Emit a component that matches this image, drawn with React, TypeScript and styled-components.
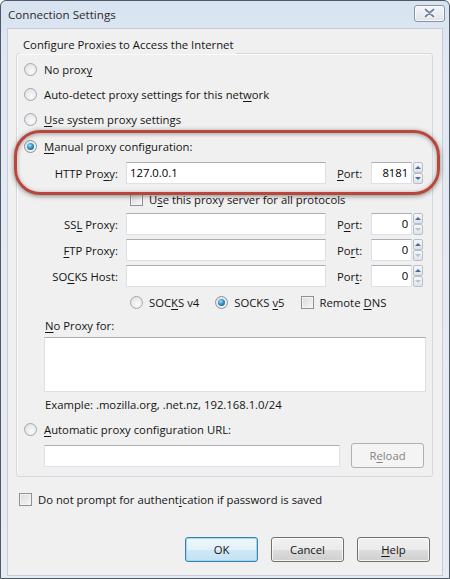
import React from 'react';
import styled, { createGlobalStyle, css } from 'styled-components';

const GlobalStyle = createGlobalStyle`
	* {
		box-sizing: border-box;
	}
	body {
		margin: 0;
		font-family: "Open Sans", "Liberation Sans", sans-serif;
		font-size: 11.3px;
		color: #141414;
	}
`;

const Window = styled.div`
	position: relative;
	width: 450px;
	height: 579px;
	display: flex;
	flex-direction: column;
	padding: 0 6px 2px;
	border: 1px solid #4f5864;
	border-radius: 6px 6px 0 0;
	background: linear-gradient(#d7e3f1, #e2e9f3 70px, #e9ebf2);
`;

const TitleBar = styled.div`
	height: 27px;
	display: flex;
	align-items: center;
	justify-content: space-between;
	padding-left: 1px;
`;

const Title = styled.span`
	font-size: 11.6px;
	color: #2a2a2a;
`;

const CloseButton = styled.div`
	width: 31px;
	height: 17px;
	margin: -3px -2px 0 0;
	display: flex;
	align-items: center;
	justify-content: center;
	border: 1px solid #8a93a0;
	border-radius: 3px;
	background: linear-gradient(#f3f6f9, #dfe5ec);
	box-shadow: inset 0 0 0 1px rgba(255, 255, 255, 0.7);
`;

const Client = styled.div`
	flex: 1;
	display: flex;
	flex-direction: column;
	padding: 17px 9px 13px 8px;
	border: 1px solid #c6ccd8;
	background: #f0f0f0;
`;

const GroupBox = styled.fieldset`
	margin: 0;
	padding: 0 6px 8px 7px;
	border: 1px solid #d3d9de;
	border-radius: 3px;
	box-shadow: inset 1px 1px 0 #fbfbfb;
`;

const Caption = styled.legend`
	position: relative;
	top: -9px;
	margin: 0 0 -4px -4px;
	padding: 0 3px;
	line-height: 15px;
`;

const Option = styled.label<{ $h?: number; $mt?: number; $indent?: number }>`
	display: flex;
	align-items: center;
	gap: 7px;
	height: ${(p) => p.$h ?? 25}px;
	margin-top: ${(p) => p.$mt ?? 0}px;
	padding-left: ${(p) => p.$indent ?? 0}px;
	white-space: nowrap;
`;

const Key = styled.u`
	text-decoration: underline;
	text-underline-offset: 2px;
`;

const Radio = styled.span<{ $checked?: boolean }>`
	position: relative;
	flex: none;
	width: 13px;
	height: 13px;
	border-radius: 50%;
	border: 1px solid #a2a6ab;
	background: radial-gradient(circle at 60% 65%, #fafafa 0, #e6e6e6 70%, #d6d6d6 100%);
	${(p) =>
		p.$checked &&
		css`
			border-color: #8a9097;
			&::after {
				content: '';
				position: absolute;
				left: 2px;
				top: 2px;
				width: 7px;
				height: 7px;
				border-radius: 50%;
				background: radial-gradient(circle at 40% 35%, #9ee3fb 0, #3090c4 45%, #174f7c 100%);
			}
		`}
`;

const Check = styled.span`
	flex: none;
	width: 13px;
	height: 13px;
	border: 1px solid #8e9297;
	background: linear-gradient(135deg, #dadada, #f8f8f8);
	box-shadow: inset 0 0 0 1px #f4f4f4;
`;

const ProxyGrid = styled.div<{ $mt?: number }>`
	display: grid;
	grid-template-columns: 102px 211px 34px 52px;
	row-gap: 4px;
	align-items: center;
	margin-top: ${(p) => p.$mt ?? 0}px;
`;

const FieldLabel = styled.span`
	padding-right: 8px;
	text-align: right;
	white-space: nowrap;
`;

const TextBox = styled.div<{ $w?: number; $right?: boolean }>`
	width: ${(p) => (p.$w ? `${p.$w}px` : 'auto')};
	height: 22px;
	padding: 0 3px;
	line-height: 20px;
	text-align: ${(p) => (p.$right ? 'right' : 'left')};
	background: #fff;
	border: 1px solid #dde1e7;
	border-top-color: #abadb3;
	color: #000;
`;

const PortBox = styled.div`
	display: flex;
`;

const Spinner = styled.div`
	width: 10px;
	height: 22px;
	display: flex;
	flex-direction: column;
	margin-left: 1px;
`;

const SpinButton = styled.div<{ $down?: boolean; $dim?: boolean }>`
	flex: 1;
	display: flex;
	align-items: center;
	justify-content: center;
	border: 1px solid #b9bfc8;
	border-radius: 2px;
	background: linear-gradient(#f6f7f9, #dfe3e8);

	&::before {
		content: '';
		border-left: 3px solid transparent;
		border-right: 3px solid transparent;
		${(p) => (p.$down ? 'border-top' : 'border-bottom')}: 3px solid ${(p) => (p.$dim ? '#b9c1cc' : '#4a6a9a')};
	}
`;

const CheckRow = styled(Option)`
	gap: 6px;
`;

const SocksRow = styled.div`
	display: flex;
	align-items: center;
	gap: 16px;
	height: 18px;
	margin-top: 6px;
	padding-left: 106px;
`;

const SocksItem = styled.label`
	display: flex;
	align-items: center;
	gap: 6px;
`;

const NoProxyLabel = styled.div`
	margin-top: 7px;
	padding-left: 21px;
	line-height: 16px;
`;

const NoProxyBox = styled(TextBox)`
	height: 55px;
	margin: 3px 0 0 20px;
`;

const Hint = styled.div`
	margin-top: 5px;
	padding-left: 21px;
	line-height: 16px;
`;

const UrlRow = styled.div`
	display: flex;
	align-items: center;
	gap: 11px;
	margin: 5px 0 0 20px;
`;

const PushButton = styled.button<{ $default?: boolean; $disabled?: boolean }>`
	width: 73px;
	height: 25px;
	padding: 0;
	font: inherit;
	color: #141414;
	border: 1px solid #707070;
	border-radius: 3px;
	background: linear-gradient(#f2f2f2 0, #ebebeb 50%, #dddddd 51%, #cfcfcf 100%);
	box-shadow: inset 0 0 0 1px rgba(255, 255, 255, 0.75);
	${(p) =>
		p.$default &&
		css`
			border-color: #3c7fb1;
			background: linear-gradient(#eef7fc 0, #e3f1fa 50%, #d0e8f6 51%, #c4e2f4 100%);
			box-shadow: inset 0 0 0 1px #9fd7f5;
		`}
	${(p) =>
		p.$disabled &&
		css`
			color: #838383;
			border-color: #adb2b5;
			background: #f4f4f4;
			box-shadow: none;
		`}
`;

const PromptRow = styled(CheckRow)`
	margin-left: 3px;
`;

const Footer = styled.div`
	margin-top: auto;
	display: flex;
	justify-content: flex-end;
	gap: 13px;
	padding-right: 3px;
`;

const Highlight = styled.div`
	position: absolute;
	left: 13px;
	top: 129px;
	width: 426px;
	height: 65px;
	border: 3px solid #b9463a;
	border-radius: 26px;
	box-shadow: 0 1px 5px rgba(0, 0, 0, 0.45), inset 0 1px 4px rgba(0, 0, 0, 0.35);
	pointer-events: none;
`;

type ProxyRow = { label: React.ReactNode; value?: string; port: React.ReactNode; portValue: string; dim?: boolean };

const httpRow: ProxyRow = {
	label: <>HTTP Pro<Key>x</Key>y:</>,
	value: '127.0.0.1',
	port: <><Key>P</Key>ort:</>,
	portValue: '8181',
};

const otherRows: ProxyRow[] = [
	{ label: <>SS<Key>L</Key> Proxy:</>, port: <>P<Key>o</Key>rt:</>, portValue: '0', dim: true },
	{ label: <><Key>F</Key>TP Proxy:</>, port: <>Po<Key>r</Key>t:</>, portValue: '0', dim: true },
	{ label: <>SO<Key>C</Key>KS Host:</>, port: <>Por<Key>t</Key>:</>, portValue: '0', dim: true },
];

const ProxyFields: React.FC<{ row: ProxyRow }> = ({ row }) => (
	<>
		<FieldLabel>{row.label}</FieldLabel>
		<TextBox $w={200}>{row.value}</TextBox>
		<span>{row.port}</span>
		<PortBox>
			<TextBox $w={42} $right>{row.portValue}</TextBox>
			<Spinner>
				<SpinButton />
				<SpinButton $down $dim={row.dim} />
			</Spinner>
		</PortBox>
	</>
);

const CloseIcon = () => (
	<svg width="13" height="10" viewBox="0 0 13 10">
		<path d="M2.5 1.5 L10.5 8.5 M10.5 1.5 L2.5 8.5" stroke="#ffffff" strokeWidth="4" strokeLinecap="round" />
		<path d="M2.5 1.5 L10.5 8.5 M10.5 1.5 L2.5 8.5" stroke="#76859a" strokeWidth="2" strokeLinecap="round" />
	</svg>
);

const App: React.FC = () => {
	return (
		<>
			<GlobalStyle />
			<Window>
				<TitleBar>
					<Title>Connection Settings</Title>
					<CloseButton>
						<CloseIcon />
					</CloseButton>
				</TitleBar>
				<Client>
					<GroupBox>
						<Caption>Configure Proxies to Access the Internet</Caption>
						<Option>
							<Radio />
							<span>No prox<Key>y</Key></span>
						</Option>
						<Option>
							<Radio />
							<span>Auto-detect proxy settings for this net<Key>w</Key>ork</span>
						</Option>
						<Option>
							<Radio />
							<span><Key>U</Key>se system proxy settings</span>
						</Option>
						<Option $mt={2}>
							<Radio $checked />
							<span><Key>M</Key>anual proxy configuration:</span>
						</Option>
						<ProxyGrid $mt={3}>
							<ProxyFields row={httpRow} />
						</ProxyGrid>
						<CheckRow $h={18} $mt={6} $indent={106}>
							<Check />
							<span>U<Key>s</Key>e this proxy server for all protocols</span>
						</CheckRow>
						<ProxyGrid $mt={5}>
							{otherRows.map((r, i) => (
								<ProxyFields key={i} row={r} />
							))}
						</ProxyGrid>
						<SocksRow>
							<SocksItem>
								<Radio />
								<span>SOC<Key>K</Key>S v4</span>
							</SocksItem>
							<SocksItem>
								<Radio $checked />
								<span>SOCKS <Key>v</Key>5</span>
							</SocksItem>
							<SocksItem>
								<Check />
								<span>Remote <Key>D</Key>NS</span>
							</SocksItem>
						</SocksRow>
						<NoProxyLabel><Key>N</Key>o Proxy for:</NoProxyLabel>
						<NoProxyBox />
						<Hint>Example: .mozilla.org, .net.nz, 192.168.1.0/24</Hint>
						<Option $h={18} $mt={7}>
							<Radio />
							<span><Key>A</Key>utomatic proxy configuration URL:</span>
						</Option>
						<UrlRow>
							<TextBox $w={296} />
							<PushButton $disabled>R<Key>e</Key>load</PushButton>
						</UrlRow>
					</GroupBox>
					<PromptRow $h={18} $mt={13}>
						<Check />
						<span>Do not prompt for authent<Key>i</Key>cation if password is saved</span>
					</PromptRow>
					<Footer>
						<PushButton $default>OK</PushButton>
						<PushButton>Cancel</PushButton>
						<PushButton><Key>H</Key>elp</PushButton>
					</Footer>
				</Client>
				<Highlight />
			</Window>
		</>
	);
};

export default App;
